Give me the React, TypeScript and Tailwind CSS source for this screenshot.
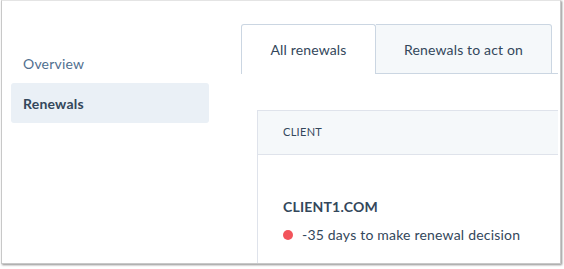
export default function App() {
  return (
    <div className="w-[564px] h-[269px] bg-white font-['Lato',sans-serif] text-[#33475b]">
      <div className="ml-[1px] w-[560px] h-[264px] border border-[#c8c8c8] border-t-[#e4e4e4] shadow-[1px_1px_2px_rgba(0,0,0,0.45)] flex overflow-hidden">
        <nav className="w-[239px] shrink-0 pl-[9px] pt-[43px]">
          <div className="w-[198px] h-[39px] flex items-center px-3 text-[14px] text-[#516f90] tracking-[0.2px]">Overview</div>
          <div className="w-[198px] h-[40px] flex items-center px-3 rounded-[3px] bg-[#eaf0f6] text-[14px] font-bold tracking-[0.2px]">
            Renewals
          </div>
        </nav>
        <main className="flex-1 pt-[23px] pr-[2px]">
          <div className="flex h-[50px] border-b border-[#cbd6e2]">
            <div className="w-[135px] -mb-px bg-white border border-b-0 border-[#cbd6e2] rounded-t-[3px] flex items-center justify-center text-[14px] tracking-[0.15px]">
              All renewals
            </div>
            <div className="w-[176px] bg-[#f5f8fa] border border-l-0 border-[#cbd6e2] rounded-tr-[3px] flex items-center justify-center text-[14px] tracking-[0.15px] -mb-px">
              Renewals to act on
            </div>
          </div>
          <div className="ml-[16px] mt-[36px] border-l border-[#dfe3eb] h-[200px]">
            <div className="h-[45px] bg-[#f5f8fa] border-y border-[#dfe3eb] flex items-center pl-[25px] text-[11px] uppercase tracking-[0.3px]">
              Client
            </div>
            <div className="pl-[25px] pt-[41px]">
              <div className="text-[14px] font-bold tracking-[0.2px]">CLIENT1.COM</div>
              <div className="flex items-center gap-[9px] mt-[7px] text-[14px] tracking-[0.2px]">
                <span className="w-[10px] h-[10px] rounded-full bg-[#f2545b]" />
                <span>-35 days to make renewal decision</span>
              </div>
            </div>
          </div>
        </main>
      </div>
    </div>
  );
}
